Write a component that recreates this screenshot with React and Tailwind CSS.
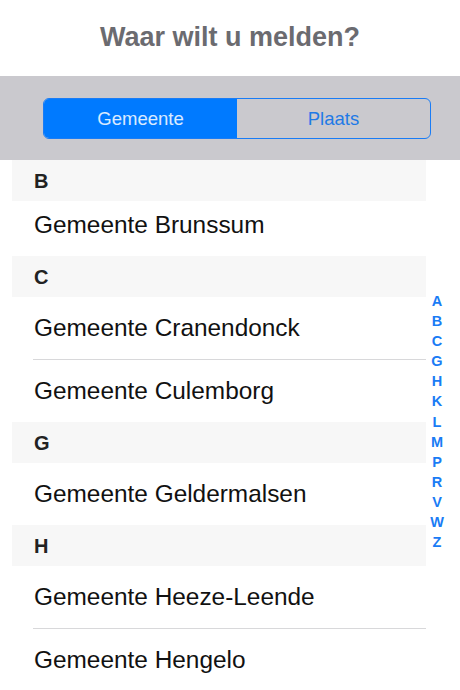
import React from "react";

const sections = [
  { letter: "B", items: ["Gemeente Brunssum"], first: true },
  { letter: "C", items: ["Gemeente Cranendonck", "Gemeente Culemborg"] },
  { letter: "G", items: ["Gemeente Geldermalsen"] },
  { letter: "H", items: ["Gemeente Heeze-Leende", "Gemeente Hengelo"] },
];

const index = ["A", "B", "C", "G", "H", "K", "L", "M", "P", "R", "V", "W", "Z"];

const App = () => {
  return (
    <div
      className="w-[460px] h-[690px] overflow-hidden bg-white"
      style={{ fontFamily: '"Liberation Sans", Arial, sans-serif' }}
    >
      <header className="h-[76px] flex items-center justify-center pb-[2px]">
        <h1 className="text-[27px] font-bold text-[#6b6b70]">Waar wilt u melden?</h1>
      </header>

      <div className="h-[84px] bg-[#cac9ce] pt-[22px] pl-[43px]">
        <div className="flex w-[388px] h-[41px] rounded-[6px] border border-[#1a7cf5] overflow-hidden">
          <div className="w-1/2 bg-[#007aff] flex items-center justify-center text-[18.5px] text-white/85">
            Gemeente
          </div>
          <div className="w-1/2 flex items-center justify-center text-[18.5px] text-[#1f7ae6]">
            Plaats
          </div>
        </div>
      </div>

      <div className="relative">
        <div className="ml-3 w-[414px]">
          {sections.map((s) => (
            <div key={s.letter}>
              <div className="h-[41px] bg-[#f7f7f7] flex items-center pl-[22px] pt-px text-[20px] font-bold text-[#222]">
                {s.letter}
              </div>
              {s.items.map((item, i) => (
                <div key={item} className="ml-[21px]">
                  {i > 0 && <div className="h-px bg-[#d8d8da]" />}
                  <div
                    className={
                      (s.first ? "h-[55px] pb-[7px]" : "h-[62px]") +
                      " flex items-center pl-px text-[24.4px] text-[#111]"
                    }
                  >
                    {item}
                  </div>
                </div>
              ))}
            </div>
          ))}
        </div>

        <div className="absolute top-[131px] right-[14px] w-[18px] flex flex-col items-center">
          {index.map((l) => (
            <span key={l} className="h-[20.1px] leading-[20px] text-[14.5px] font-bold text-[#1a7cf5]">
              {l}
            </span>
          ))}
        </div>
      </div>
    </div>
  );
};

export default App;
